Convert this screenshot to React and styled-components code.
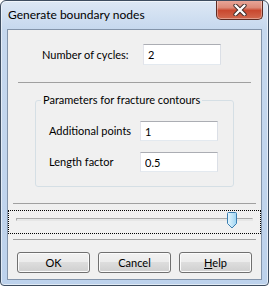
import React from 'react';
import styled, { createGlobalStyle } from 'styled-components';

const GlobalStyle = createGlobalStyle`
  html, body { margin: 0; padding: 0; background: #fff; }
  body {
    font-family: Lato, "Segoe UI", sans-serif;
    font-size: 11px;
    color: #000;
    white-space: nowrap;
  }
  * { box-sizing: border-box; }
`;

const Window = styled.div`
  width: 269px;
  height: 286px;
  border: 1px solid #3e4d60;
  border-radius: 6px 6px 4px 4px;
  background: linear-gradient(#dde8f5 0px, #c6d8ee 28px, #bdd2ec 100%);
  box-shadow: inset 0 0 0 1px rgba(255, 255, 255, 0.55);
  padding: 0 6px 5px 6px;
  display: flex;
  flex-direction: column;
  overflow: hidden;
`;

const TitleBar = styled.div`
  height: 28px;
  display: flex;
  align-items: flex-start;
  flex-shrink: 0;
`;

const Title = styled.span`
  margin: 6px 0 0 1px;
  font-size: 12px;
  line-height: 16px;
`;

const CloseButton = styled.div`
  margin: -1px -1px 0 auto;
  width: 47px;
  height: 20px;
  border: 1px solid #5e2b22;
  border-top: none;
  border-radius: 0 0 5px 5px;
  background: linear-gradient(#e9a99c 0%, #dc8a78 40%, #c9482f 55%, #d2694f 100%);
  box-shadow: inset 0 0 0 1px rgba(255, 255, 255, 0.35);
  display: flex;
  align-items: center;
  justify-content: center;
`;

const Client = styled.div`
  flex: 1;
  min-height: 0;
  border: 1px solid #8394aa;
  background: #f0f0f0;
  display: flex;
  flex-direction: column;
`;

const FieldRow = styled.div`
  display: flex;
  align-items: center;
  margin-top: ${(p) => p.$top || 0}px;
  padding-left: ${(p) => p.$indent || 0}px;
  flex-shrink: 0;
`;

const Label = styled.span`
  width: ${(p) => p.$width}px;
  flex-shrink: 0;
  line-height: 16px;
`;

const TextBox = styled.input`
  width: 78px;
  height: ${(p) => p.$height || 21}px;
  border: 1px solid;
  border-color: #abadb3 #dbdfe6 #e3e9ef #e2e3ea;
  background: #fff;
  padding: 0 0 0 4px;
  font: inherit;
  color: #000;
  outline: none;
`;

const Separator = styled.div`
  height: 1px;
  background: #a0a0a0;
  margin: ${(p) => p.$top}px ${(p) => p.$side}px 0 ${(p) => p.$side}px;
  flex-shrink: 0;
`;

const GroupBox = styled.fieldset`
  margin: 9px 0 0 27px;
  width: 199px;
  padding: 0 0 14px 13px;
  border: 1px solid #d5dfe5;
  border-radius: 3px;
  min-width: 0;
  flex-shrink: 0;
`;

const GroupTitle = styled.legend`
  margin-left: -8px;
  padding: 0 2px;
  line-height: 16px;
`;

const SliderBox = styled.div`
  position: relative;
  margin-top: 6px;
  height: 24px;
  border: 1px dotted #000;
  flex-shrink: 0;
`;

const Track = styled.div`
  margin: 7px 7px 0 7px;
  height: 3px;
  border-top: 1px solid #a9a9a9;
  border-left: 1px solid #a9a9a9;
  border-bottom: 1px solid #e6e6e6;
  border-right: 1px solid #e6e6e6;
  background: #e7eaea;
`;

const Thumb = styled.svg`
  position: absolute;
  left: 218px;
  top: 1px;
`;

const ButtonRow = styled.div`
  display: flex;
  gap: 8px;
  margin-top: 12px;
  padding-left: 9px;
  flex-shrink: 0;
`;

const Button = styled.button`
  width: 73px;
  height: 21px;
  border: 1px solid #707070;
  border-radius: 3px;
  background: linear-gradient(#f2f2f2 0%, #ebebeb 50%, #dddddd 50%, #cfcfcf 100%);
  box-shadow: inset 0 0 0 1px #fbfbfb;
  font: inherit;
  color: #000;
  padding: 0;
  line-height: 16px;
`;

const Key = styled.span`
  text-decoration: underline;
`;

export default function App() {
  return (
    <>
      <GlobalStyle />
      <Window>
        <TitleBar>
          <Title>Generate boundary nodes</Title>
          <CloseButton>
            <svg width="14" height="12" viewBox="0 0 14 12">
              <path d="M2.5 1.5 L11.5 10.5 M11.5 1.5 L2.5 10.5" stroke="#3b2a28" strokeWidth="4.2" strokeLinecap="round" />
              <path d="M2.5 1.5 L11.5 10.5 M11.5 1.5 L2.5 10.5" stroke="#fff" strokeWidth="2.4" strokeLinecap="round" />
            </svg>
          </CloseButton>
        </TitleBar>
        <Client>
          <FieldRow $top={14} $indent={34}>
            <Label $width={101}>Number of cycles:</Label>
            <TextBox defaultValue="2" />
          </FieldRow>
          <Separator $top={17} $side={10} />
          <GroupBox>
            <GroupTitle>Parameters for fracture contours</GroupTitle>
            <FieldRow $top={13}>
              <Label $width={91}>Additional points</Label>
              <TextBox $height={20} defaultValue="1" />
            </FieldRow>
            <FieldRow $top={11}>
              <Label $width={91}>Length factor</Label>
              <TextBox $height={20} defaultValue="0.5" />
            </FieldRow>
          </GroupBox>
          <Separator $top={16} $side={5} />
          <SliderBox>
            <Track />
            <Thumb width="11" height="17" viewBox="0 0 11 17">
              <defs>
                <linearGradient id="thumbFill" x1="0" y1="0" x2="1" y2="0">
                  <stop offset="0" stopColor="#e6f6fd" />
                  <stop offset="1" stopColor="#9fd5f3" />
                </linearGradient>
              </defs>
              <path d="M1.5 0.5 H8.5 Q9.5 0.5 9.5 1.5 V11.5 L5 16 L0.5 11.5 V1.5 Q0.5 0.5 1.5 0.5 Z" fill="url(#thumbFill)" stroke="#3c7fb1" />
            </Thumb>
          </SliderBox>
          <Separator $top={5} $side={5} />
          <ButtonRow>
            <Button>OK</Button>
            <Button>Cancel</Button>
            <Button><Key>H</Key>elp</Button>
          </ButtonRow>
        </Client>
      </Window>
    </>
  );
}
